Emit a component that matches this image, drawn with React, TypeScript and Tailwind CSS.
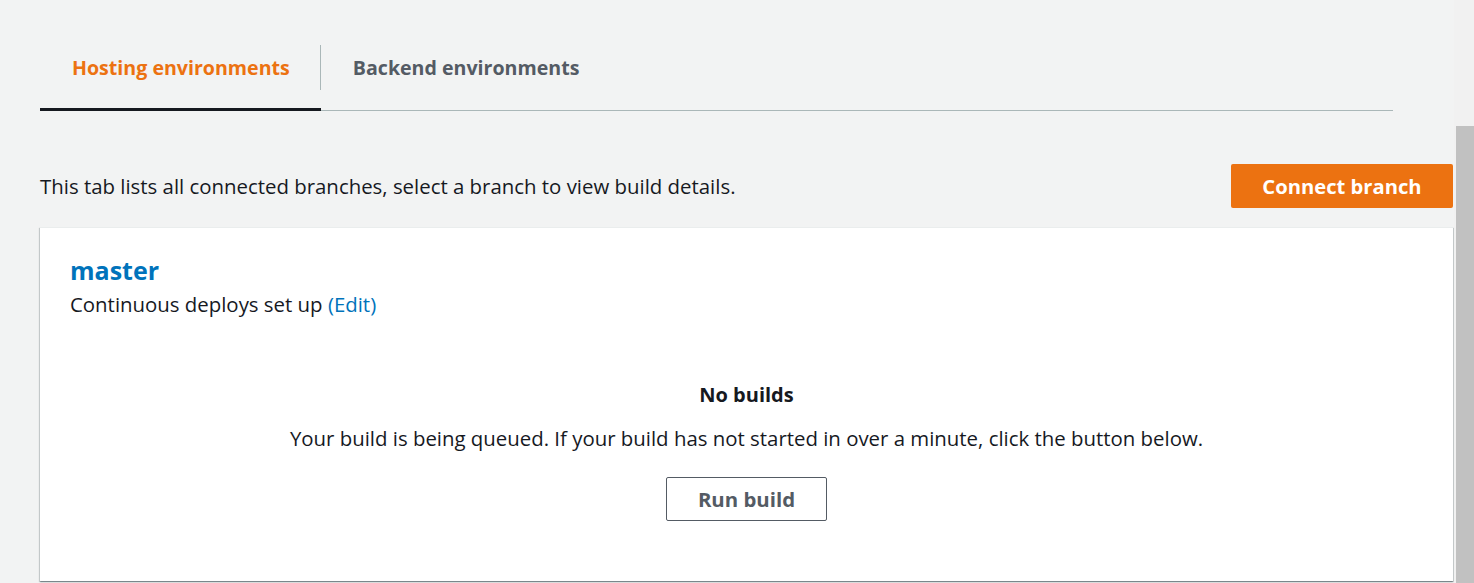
export default function App() {
  return (
    <div className="flex h-[583px] w-full overflow-hidden bg-[#f2f3f3] font-['Open_Sans',sans-serif] text-[#16191f]">
      <main className="flex-1 pl-10 pr-px">
        {/* Tabs */}
        <div className="mr-[60px] flex border-b border-[#aab7b8]">
          <div className="-mb-px border-b-[3px] border-[#16191f] pt-[45px] pb-[18px]">
            <div className="flex h-[45px] items-center border-r border-[#aab7b8] pl-8 pr-[30px] text-[19.6px] font-bold text-[#ec7211]">
              Hosting environments
            </div>
          </div>
          <div className="-mb-px border-b-[3px] border-transparent pt-[45px] pb-[18px]">
            <div className="flex h-[45px] items-center px-8 text-[19.6px] font-bold text-[#545b64]">
              Backend environments
            </div>
          </div>
        </div>

        {/* Description + action */}
        <div className="mt-[53px] flex h-[44px] items-center justify-between">
          <p className="text-[20.4px]">This tab lists all connected branches, select a branch to view build details.</p>
          <button className="h-[44px] w-[222px] rounded-[2px] bg-[#ec7211] text-[20.2px] font-bold text-white">
            Connect branch
          </button>
        </div>

        {/* Branch card */}
        <section className="mt-[19px] h-[354px] border-t border-[#eaeded] bg-white px-[30px] pt-[26px] shadow-[0_1px_1px_0_rgba(0,28,36,0.3),1px_1px_1px_0_rgba(0,28,36,0.15),-1px_1px_1px_0_rgba(0,28,36,0.15)]">
          <h2 className="text-[25px] font-bold leading-[32px] text-[#0073bb]">master</h2>
          <p className="mt-[6px] text-[20.4px] leading-[24px]">
            Continuous deploys set up <span className="text-[#0073bb]">(Edit)</span>
          </p>

          <div className="mt-[67px] flex flex-col items-center text-center">
            <h3 className="text-[20px] font-bold leading-[24px]">No builds</h3>
            <p className="mt-[19px] text-[20.4px] leading-[24px]">
              Your build is being queued. If your build has not started in over a minute, click the button below.
            </p>
            <button className="mt-[27px] h-[44px] w-[161px] rounded-[2px] border border-[#545b64] bg-white text-[20.4px] font-bold text-[#545b64]">
              Run build
            </button>
          </div>
        </section>
      </main>

      {/* Scrollbar */}
      <div className="flex w-[20px] flex-col bg-[#f1f1f1] pl-[2px]">
        <div className="h-[126px]" />
        <div className="flex-1 bg-[#c1c1c1]" />
      </div>
    </div>
  )
}
